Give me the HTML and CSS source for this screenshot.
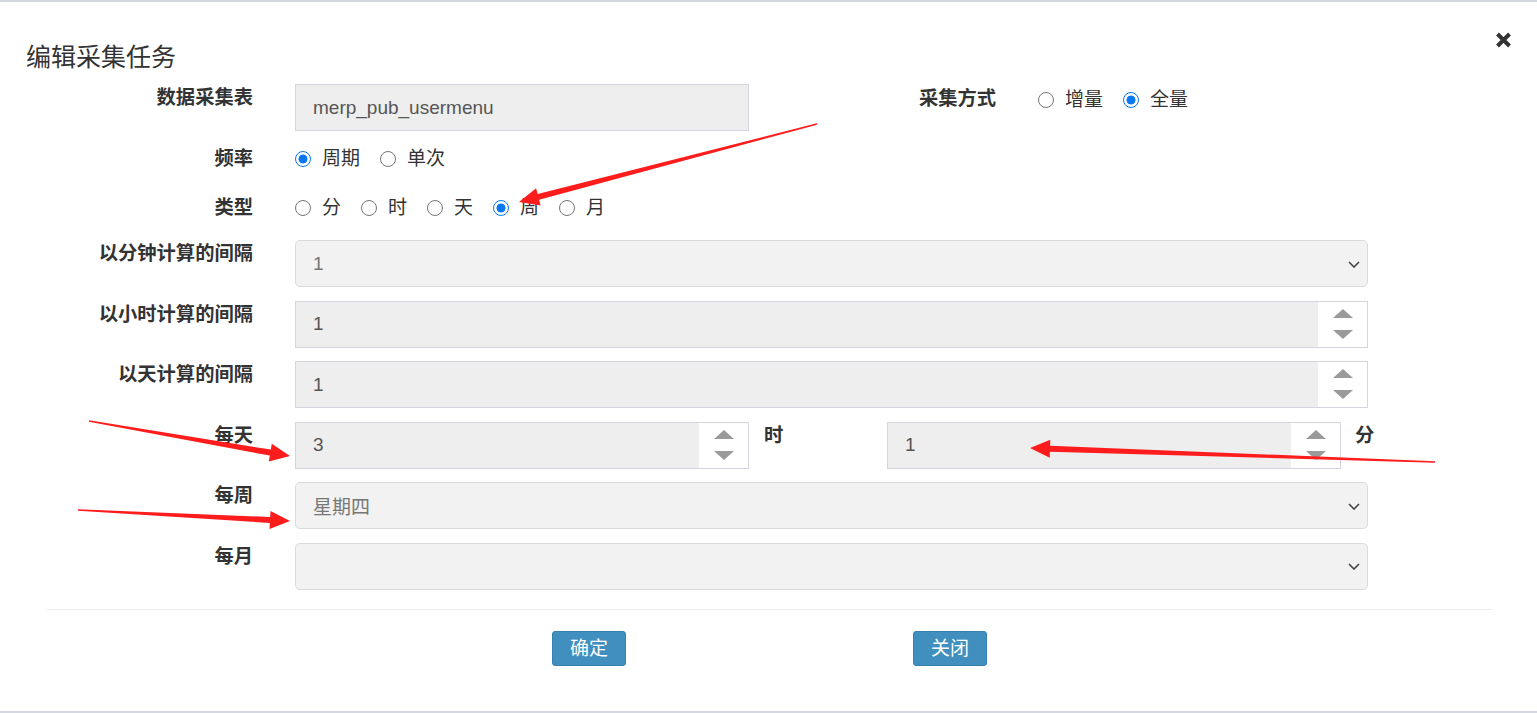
FILE: index.html
```html
<!DOCTYPE html>
<html lang="zh-CN">
<head>
<meta charset="utf-8">
<title>编辑采集任务</title>
<link rel="stylesheet" href="styles.css">
</head>
<body>
<div class="modal">
  <div class="modal-header">
    <h4 class="modal-title">编辑采集任务</h4>
    <button class="close" type="button" aria-label="关闭">
      <svg width="17" height="16" viewBox="0 0 17 16"><path d="M2.5 2 L14.5 14 M14.5 2 L2.5 14" stroke="#333" stroke-width="4" stroke-linecap="butt"/></svg>
    </button>
  </div>

  <div class="modal-body">
    <div class="form-row">
      <label class="form-label">数据采集表</label>
      <div class="field">
        <div class="control half">merp_pub_usermenu</div>
        <label class="side-label wide">采集方式</label>
        <div class="radios top">
          <label class="radio"><input type="radio" name="mode"><span>增量</span></label>
          <label class="radio"><input type="radio" name="mode" checked><span>全量</span></label>
        </div>
      </div>
    </div>

    <div class="form-row radio-row">
      <label class="form-label">频率</label>
      <div class="radios">
        <label class="radio"><input type="radio" name="freq" checked><span>周期</span></label>
        <label class="radio"><input type="radio" name="freq"><span>单次</span></label>
      </div>
    </div>

    <div class="form-row radio-row">
      <label class="form-label">类型</label>
      <div class="radios">
        <label class="radio"><input type="radio" name="type"><span>分</span></label>
        <label class="radio"><input type="radio" name="type"><span>时</span></label>
        <label class="radio"><input type="radio" name="type"><span>天</span></label>
        <label class="radio"><input type="radio" name="type" checked><span>周</span></label>
        <label class="radio"><input type="radio" name="type"><span>月</span></label>
      </div>
    </div>

    <div class="form-row">
      <label class="form-label">以分钟计算的间隔</label>
      <div class="select"><span>1</span><svg class="chev" width="12" height="7" viewBox="0 0 12 7"><path d="M1 1 L6 6 L11 1" fill="none" stroke="#444" stroke-width="1.6"/></svg></div>
    </div>

    <div class="form-row">
      <label class="form-label">以小时计算的间隔</label>
      <div class="control spin-control"><span class="val">1</span><span class="spin"><i class="up"></i><i class="down"></i></span></div>
    </div>

    <div class="form-row">
      <label class="form-label">以天计算的间隔</label>
      <div class="control spin-control"><span class="val">1</span><span class="spin"><i class="up"></i><i class="down"></i></span></div>
    </div>

    <div class="form-row">
      <label class="form-label">每天</label>
      <div class="field">
        <div class="control spin-control half"><span class="val">3</span><span class="spin"><i class="up"></i><i class="down"></i></span></div>
        <label class="side-label hour">时</label>
        <div class="control spin-control half"><span class="val">1</span><span class="spin"><i class="up"></i><i class="down"></i></span></div>
        <label class="side-label minute">分</label>
      </div>
    </div>

    <div class="form-row">
      <label class="form-label">每周</label>
      <div class="select"><span>星期四</span><svg class="chev" width="12" height="7" viewBox="0 0 12 7"><path d="M1 1 L6 6 L11 1" fill="none" stroke="#444" stroke-width="1.6"/></svg></div>
    </div>

    <div class="form-row">
      <label class="form-label">每月</label>
      <div class="select"><span></span><svg class="chev" width="12" height="7" viewBox="0 0 12 7"><path d="M1 1 L6 6 L11 1" fill="none" stroke="#444" stroke-width="1.6"/></svg></div>
    </div>
  </div>

  <div class="modal-footer">
    <button class="btn" type="button">确定</button>
    <button class="btn" type="button">关闭</button>
  </div>
</div>

<svg class="annotations" width="1537" height="713" viewBox="0 0 1537 713">
  <g fill="#ff1c1c">
    <polygon points="817.2,124.7 816.8,123.3 537.6,194.0 536.1,188.2 519,202 540.6,205.6 539.1,199.8"/>
    <polygon points="89.1,420.3 88.9,421.7 269.8,455.6 268.8,461.5 290,456 271.8,443.7 270.8,449.6"/>
    <polygon points="78,509.3 78,510.7 269.8,523.0 269.5,529.0 290,521 270.5,511.0 270.2,517.0"/>
    <polygon points="1435,461.3 1435,462.7 1049.9,451.7 1049.7,457.7 1030,448 1050.3,439.7 1050.1,445.7"/>
  </g>
</svg>
</body>
</html>
```

FILE: styles.css
```css
html, body {
  margin: 0;
  padding: 0;
  background: #fff;
}

body {
  position: relative;
  width: 1537px;
  height: 713px;
  overflow: hidden;
  font-family: "Liberation Sans", "Noto Sans CJK SC", sans-serif;
  color: #333;
}

.modal {
  box-sizing: border-box;
  height: 713px;
  border-top: 2px solid #d6d8e0;
  border-bottom: 2px solid #d6d8e0;
}

.modal-header {
  height: 82px;
  box-sizing: border-box;
  padding: 40px 25px 0 26px;
  display: flex;
  justify-content: space-between;
  align-items: flex-start;
}

.modal-title {
  margin: 0;
  font-size: 25px;
  line-height: 30px;
  font-weight: normal;
  color: #333;
}

.close {
  margin-top: -10px;
  padding: 0;
  border: 0;
  background: none;
  width: 17px;
  height: 16px;
  display: flex;
}

.form-row {
  display: grid;
  grid-template-columns: 205px 1073px;
  column-gap: 42px;
  margin-left: 48px;
  margin-bottom: 13.6px;
  align-items: start;
}

.form-row:first-child {
  margin-bottom: 12px;
}

.form-row:last-child {
  margin-bottom: 0;
}

.form-row.radio-row {
  height: 32px;
  align-items: center;
  margin-bottom: 16.5px;
}

.form-label {
  text-align: right;
  font-size: 19.3px;
  line-height: 28px;
  font-weight: bold;
  color: #333;
}

.field {
  display: flex;
  align-items: flex-start;
}

.side-label {
  flex: none;
  font-size: 19.3px;
  line-height: 28px;
  font-weight: bold;
  color: #333;
}

.side-label.wide {
  width: 247px;
  text-align: right;
  margin-right: 42px;
  padding-top: 1px;
}

.side-label.hour {
  margin-left: 15px;
  width: 123px;
}

.side-label.minute {
  margin-left: 14px;
}

.radios {
  display: flex;
  align-items: center;
  height: 32px;
}

.radios.top {
  height: 28px;
  padding-top: 2px;
}

.radio {
  display: flex;
  align-items: center;
  margin-right: 20px;
  font-size: 19px;
  line-height: 28px;
  color: #333;
}

.radio input {
  appearance: none;
  -webkit-appearance: none;
  box-sizing: border-box;
  width: 16px;
  height: 16px;
  margin: 0 11px 0 0;
  border: 1px solid #767676;
  border-radius: 50%;
  background: #fff;
}

.radio input:checked {
  border: 1.5px solid #0a78f0;
  background: radial-gradient(circle, #0a78f0 0 4.2px, #fff 4.8px);
}

.control {
  box-sizing: border-box;
  height: 47px;
  border: 1px solid #d3d6df;
  background: #eee;
  display: flex;
  align-items: center;
  padding-left: 17px;
  font-size: 19px;
  color: #555;
}

.control.half {
  width: 454px;
  flex: none;
}

.spin-control {
  align-items: stretch;
}

.spin-control .val {
  flex: 1;
  display: flex;
  align-items: center;
}

.spin {
  width: 49px;
  background: #fff;
  display: flex;
  flex-direction: column;
  align-items: center;
  padding-top: 7px;
  box-sizing: border-box;
  gap: 12px;
}

.spin i {
  display: block;
  width: 0;
  height: 0;
  border-left: 10px solid transparent;
  border-right: 10px solid transparent;
}

.spin .up {
  border-bottom: 9px solid #9a9a9a;
}

.spin .down {
  border-top: 9px solid #9a9a9a;
}

.select {
  box-sizing: border-box;
  height: 47px;
  border: 1px solid #dadada;
  border-radius: 5px;
  background: #f2f2f2;
  display: flex;
  align-items: center;
  justify-content: space-between;
  padding: 0 7px 0 17px;
  font-size: 19px;
  color: #777;
}

.chev {
  display: block;
  margin-top: 1px;
}

.modal-footer {
  margin: 19px 45px 0 47px;
  border-top: 1px solid #ebedf0;
  padding-top: 21px;
  display: flex;
  justify-content: center;
  gap: 287px;
}

.btn {
  box-sizing: border-box;
  width: 74px;
  height: 35px;
  padding: 0;
  border: 1px solid #3a80ad;
  border-radius: 3px;
  background: #418fbf;
  color: #fff;
  font-family: "Liberation Sans", "Noto Sans CJK SC", sans-serif;
  font-size: 19px;
  line-height: 33px;
}

.annotations {
  position: absolute;
  top: 0;
  left: 0;
  pointer-events: none;
}
```
